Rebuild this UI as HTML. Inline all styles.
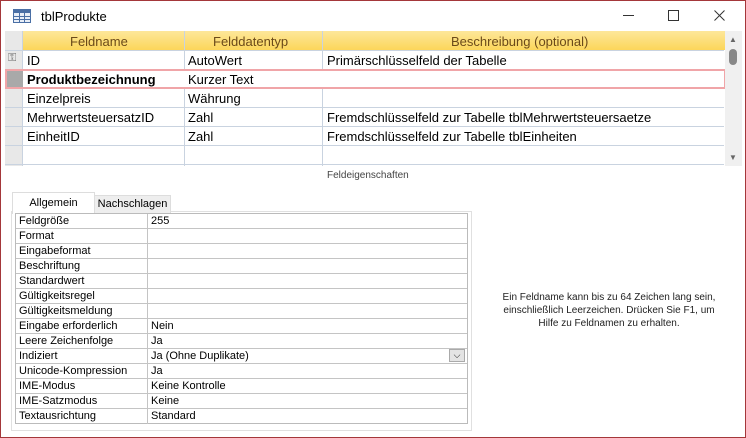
<!DOCTYPE html><html><head><style>
body{margin:0;width:746px;height:438px;overflow:hidden;background:#fff;font-family:"Liberation Sans",sans-serif;}
.win{position:absolute;left:0;top:0;width:744px;height:436px;border:1px solid #a4373a;background:#fff}
.t{position:absolute;white-space:nowrap}
.g{position:absolute;font-size:13px}
.hl{position:absolute;left:4px;right:21px;height:1px;background:#c9d3e0}
.vl{position:absolute;width:1px;background:#c9d3e0;top:30px;height:135px}
.prop{position:absolute;left:14px;top:212px;width:451px;border:1px solid #bbb}
.prop div{height:14px;border-bottom:1px solid #c4c4c4;font-size:11px;line-height:14px;position:relative}
.prop div:last-child{border-bottom:none}
.prop span{position:absolute;left:3px}
.prop b{position:absolute;left:135px;font-weight:normal}
</style></head><body><div class="win">
<svg class="t" style="left:12px;top:8px" width="18" height="14"><rect x="0.5" y="0.5" width="17" height="13" fill="#e8eef7" stroke="#4a6fa5"/><rect x="1" y="1" width="16" height="3" fill="#4a6fa5"/><path d="M1 7.5H17M1 10.5H17M6.5 4V13M11.5 4V13" stroke="#4a6fa5"/></svg>
<div class="t" style="left:40px;top:8px;font-size:13px">tblProdukte</div>
<div class="t" style="left:622px;top:14px;width:11px;height:1px;background:#333"></div>
<div class="t" style="left:667px;top:9px;width:9px;height:9px;border:1px solid #333"></div>
<svg class="t" style="left:713px;top:9px" width="11" height="11"><path d="M0.5 0.5L10.5 10.5M10.5 0.5L0.5 10.5" stroke="#333" stroke-width="1"/></svg>
<div class="t" style="left:4px;top:30px;width:720px;height:19px;background:linear-gradient(#fde79a,#fcd65a)"></div>
<div class="t" style="left:4px;top:30px;width:17px;height:135px;background:#e8e8e8"></div>
<div class="hl" style="top:49px"></div><div class="hl" style="top:106px"></div><div class="hl" style="top:125px"></div><div class="hl" style="top:144px"></div><div class="hl" style="top:163px"></div>
<div class="vl" style="left:21px"></div><div class="vl" style="left:183px"></div><div class="vl" style="left:321px"></div>
<div class="t" style="left:4px;top:68px;width:717px;height:16px;border:2px solid #f0a5a8;background:#fff"></div>
<div class="t" style="left:6px;top:70px;width:16px;height:16px;background:#a9a9a9"></div>
<div class="t" style="left:7px;top:51px;font-size:11px;color:#666">⚿</div>
<div class="g" style="left:69px;top:33px;color:#6b4a1a">Feldname</div>
<div class="g" style="left:212px;top:33px;color:#6b4a1a">Felddatentyp</div>
<div class="g" style="left:450px;top:33px;color:#6b4a1a">Beschreibung (optional)</div>
<div class="g" style="left:26px;top:52px">ID</div><div class="g" style="left:187px;top:52px">AutoWert</div><div class="g" style="left:326px;top:52px">Primärschlüsselfeld der Tabelle</div>
<div class="g" style="left:26px;top:71px;font-weight:bold">Produktbezeichnung</div><div class="g" style="left:187px;top:71px">Kurzer Text</div>
<div class="g" style="left:26px;top:90px">Einzelpreis</div><div class="g" style="left:187px;top:90px">Währung</div>
<div class="g" style="left:26px;top:109px">MehrwertsteuersatzID</div><div class="g" style="left:187px;top:109px">Zahl</div><div class="g" style="left:326px;top:109px">Fremdschlüsselfeld zur Tabelle tblMehrwertsteuersaetze</div>
<div class="g" style="left:26px;top:128px">EinheitID</div><div class="g" style="left:187px;top:128px">Zahl</div><div class="g" style="left:326px;top:128px">Fremdschlüsselfeld zur Tabelle tblEinheiten</div>
<div class="t" style="left:724px;top:30px;width:17px;height:135px;background:#f0f0f0"></div>
<div class="t" style="left:728px;top:34px;font-size:8px;color:#666">▲</div>
<div class="t" style="left:728px;top:48px;width:8px;height:16px;border-radius:4px;background:#888"></div>
<div class="t" style="left:728px;top:152px;font-size:8px;color:#666">▼</div>
<div class="t" style="left:326px;top:169px;font-size:10px;color:#444">Feldeigenschaften</div>
<div class="t" style="left:10px;top:210px;width:459px;height:218px;border:1px solid #e0e0e0;background:#fff"></div>
<div class="t" style="left:11px;top:191px;width:81px;height:21px;border:1px solid #ddd;border-bottom:none;background:#fff;font-size:11px;text-align:center;line-height:20px">Allgemein</div>
<div class="t" style="left:93px;top:194px;width:75px;height:17px;border:1px solid #ddd;background:#eee;font-size:11px;text-align:center;line-height:17px">Nachschlagen</div>
<div class="prop">
<div><span>Feldgröße</span><b>255</b></div><div><span>Format</span></div><div><span>Eingabeformat</span></div><div><span>Beschriftung</span></div><div><span>Standardwert</span></div><div><span>Gültigkeitsregel</span></div><div><span>Gültigkeitsmeldung</span></div><div><span>Eingabe erforderlich</span><b>Nein</b></div><div><span>Leere Zeichenfolge</span><b>Ja</b></div><div><span>Indiziert</span><b>Ja (Ohne Duplikate)</b><i style="position:absolute;right:2px;top:0;width:14px;height:11px;border:1px solid #aaa;background:#e4e4e4;font-size:9px;text-align:center;line-height:11px;font-style:normal">⌵</i></div><div><span>Unicode-Kompression</span><b>Ja</b></div><div><span>IME-Modus</span><b>Keine Kontrolle</b></div><div><span>IME-Satzmodus</span><b>Keine</b></div><div><span>Textausrichtung</span><b>Standard</b></div>
</div>
<div class="t" style="left:146px;top:213px;width:1px;height:210px;background:#c4c4c4"></div>
<div class="t" style="left:492px;top:290px;width:232px;text-align:center;font-size:10px;line-height:13px;white-space:normal;color:#222">Ein Feldname kann bis zu 64 Zeichen lang sein, einschließlich Leerzeichen. Drücken Sie F1, um Hilfe zu Feldnamen zu erhalten.</div>
</div></body></html>
